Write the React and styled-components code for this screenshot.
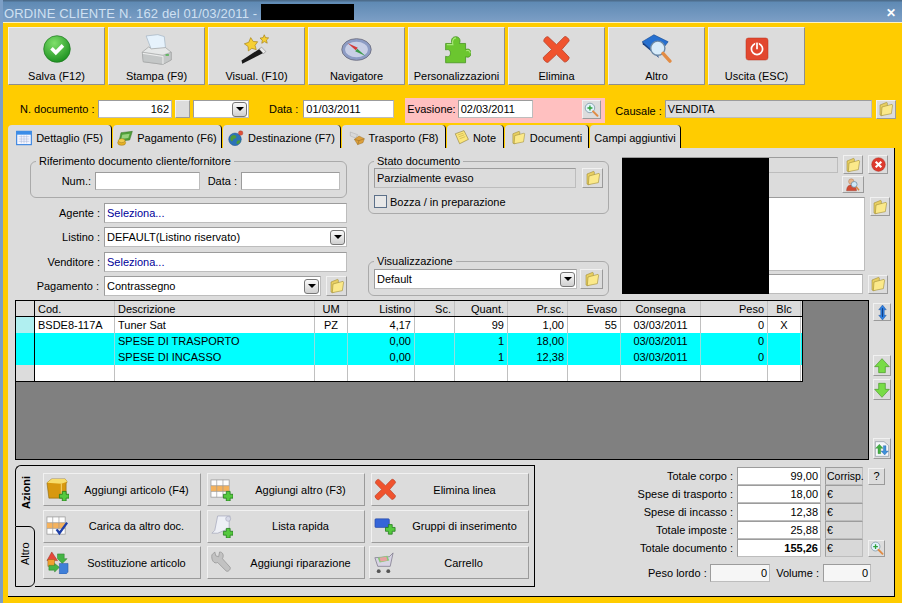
import styled, { createGlobalStyle } from "styled-components";

const Global = createGlobalStyle`
  html, body { margin: 0; padding: 0; background: #ffcc00; }
  * { box-sizing: border-box; }
`;

/* ---------- icons ---------- */
const Ico = styled.svg`
  flex: none;
  display: block;
`;

const Svg = ({ s = 16, children }) => (
  <Ico width={s} height={s} viewBox="0 0 24 24">{children}</Ico>
);

const Check = ({ s }) => (
  <Svg s={s}>
    <defs>
      <radialGradient id="gck" cx="40%" cy="28%" r="80%">
        <stop offset="0" stopColor="#7fe06a" />
        <stop offset="1" stopColor="#158a1a" />
      </radialGradient>
    </defs>
    <circle cx="12" cy="12" r="11.4" fill="url(#gck)" stroke="#1d7a20" strokeWidth=".6" />
    <path d="M6.2 12.5l2.2-2.3 2.6 2.6 5-5 2.2 2.2-7.2 7.3z" fill="#fff" />
  </Svg>
);

const Printer = ({ s }) => (
  <Svg s={s}>
    <path d="M4 1.5l9-1 5 1.5 1 9-11 1z" fill="#e6f2fc" stroke="#9fb2c2" strokeWidth=".5" />
    <path d="M1 14l5-4 2 1.5 11-1 4.4 3.6v6L17 23.5 2 21.5z" fill="#e6e8e8" stroke="#9a9c9c" strokeWidth=".5" />
    <path d="M1 14l16 2.4 6.4-2.4v6L17 23.5 1.6 21.5z" fill="#c4c7c7" stroke="#9a9c9c" strokeWidth=".4" />
    <path d="M1.4 15l15.6 2.4v6" fill="none" stroke="#f4f4f4" strokeWidth=".7" />
    <rect x="19" y="15.6" width="2.6" height="1.3" fill="#55b455" />
  </Svg>
);

const Wand = ({ s }) => (
  <Svg s={s}>
    <path d="M1 23l-.6-2.4L15 11l3 3.4z" fill="#1a1a1a" />
    <path d="M14 11.6l2-1.4 3.2 3.4-1.8 1.6z" fill="#eaeaea" stroke="#777" strokeWidth=".4" />
    <path d="M7.5 2.8l2 3 3.4.2-2 2.8.9 3.3-3.4-1-2.7 2-.2-3.4L2.6 7.6 6 6.4z" fill="#f6cf32" stroke="#a37e10" strokeWidth=".5" />
    <path d="M18 .6l1 2.2 2.4.2-1.7 1.7.6 2.4-2.2-1.2-2 1.3.4-2.4-1.8-1.6 2.4-.4z" fill="#f6cf32" stroke="#a37e10" strokeWidth=".5" />
  </Svg>
);

const Compass = ({ s }) => (
  <Svg s={s}>
    <ellipse cx="12" cy="12" rx="11.4" ry="8.4" fill="#8d9cc4" stroke="#667" strokeWidth=".6" />
    <ellipse cx="12" cy="12" rx="8.8" ry="6" fill="#c8cfe6" />
    <path d="M5 7l8 3.6-1.6 2z" fill="#d23a3a" />
    <path d="M19 17l-8-3.6 1.6-2z" fill="#3b9a4a" />
  </Svg>
);

const Puzzle = ({ s }) => (
  <Svg s={s}>
    <path d="M3 7h5.4c-1.4-3 .2-5.6 3-5.6s4.4 2.6 3 5.6H19.5v5c3-1.2 4.5.7 4.5 3s-1.5 4.2-4.5 3v5H3v-5.4c2.6 1 4-.6 4-2.6s-1.4-3.6-4-2.6z" fill="#6bc62f" stroke="#3e8f17" strokeWidth=".6" />
    <path d="M4 8h5c-1-3 .4-5.6 2.6-5.6M20 13c2-.8 3.4.4 3.4 2" fill="none" stroke="#a8e878" strokeWidth=".9" />
  </Svg>
);

const RedX = ({ s }) => (
  <Svg s={s}>
    <path d="M5 1.5L12 8l6.6-6.6c1-.8 4.4 2 3.8 3.6L16.4 12l6 6.4c.4 1.6-2.4 4.6-4 3.8L12 16l-7 6.6c-1.6.6-4.6-2.6-3.8-4.2L8 12 1.6 5.4C1 3.6 3.4 1 5 1.5z" fill="#f0532e" stroke="#b9442c" strokeWidth=".7" />
  </Svg>
);

const BookSearch = ({ s }) => (
  <Svg s={s}>
    <path d="M1 6l9-5.4L21 6l-8 10.5z" fill="#2670d0" stroke="#184c96" strokeWidth=".5" />
    <path d="M1 6l12 10.5 1 2L1.4 8z" fill="#123f86" />
    <circle cx="13" cy="11" r="5.5" fill="#d8ecfa" stroke="#6b88a5" strokeWidth="1.1" />
    <path d="M17 15l5.4 6" stroke="#e28c45" strokeWidth="2.6" strokeLinecap="round" />
  </Svg>
);

const Power = ({ s }) => (
  <Svg s={s}>
    <rect x="1" y="1" width="22" height="22" rx="2.4" fill="#e2472f" stroke="#b7331f" strokeWidth=".5" />
    <circle cx="12" cy="12" r="5.6" fill="none" stroke="#fff" strokeWidth="1.7" />
    <path d="M12 5.4v6.6" stroke="#e2472f" strokeWidth="3.6" />
    <path d="M12 5.8v6.4" stroke="#fff" strokeWidth="1.7" />
  </Svg>
);

const Calendar = ({ s }) => (
  <Svg s={s}>
    <rect x="1" y="2" width="22" height="20" fill="#f4f6ff" stroke="#2f7fe0" strokeWidth="1.6" />
    <rect x="1" y="2" width="22" height="5" fill="#3a8ce8" />
    <path d="M4 10h16M4 13.5h16M4 17h16M8 8v12M12 8v12M16 8v12" stroke="#a8b8d8" strokeWidth=".8" />
  </Svg>
);

const Money = ({ s }) => (
  <Svg s={s}>
    <path d="M6 4l17-2-4 13-16 2z" fill="#4f9f38" stroke="#2f6b1f" strokeWidth=".7" />
    <path d="M8 7l11-1.4-2 6.4-10.6 1.4z" fill="#97d27c" />
    <ellipse cx="7" cy="19" rx="6" ry="4" fill="#e6b126" stroke="#9a7212" strokeWidth=".7" />
    <ellipse cx="7" cy="16" rx="5" ry="3" fill="#f2cb4c" stroke="#9a7212" strokeWidth=".7" />
  </Svg>
);

const Globe = ({ s }) => (
  <Svg s={s}>
    <circle cx="10.5" cy="14" r="9.5" fill="#2c72b8" stroke="#174a80" strokeWidth=".6" />
    <path d="M4 10c3-3 6-3 8-1s-1 4-3 4-1 4-3 4-3-4-2-7zM14 16c2-1 4-1 5 0-1 3-3 5-5 5s-1-4 0-5z" fill="#4d9a3a" />
    <circle cx="19" cy="4.6" r="3.4" fill="#e0503a" stroke="#9d2f20" strokeWidth=".5" />
  </Svg>
);

const Truck = ({ s }) => (
  <Svg s={s}>
    <path d="M2 3l11 4-3 5-8-3z" fill="#d8d8d8" stroke="#a0a0a0" strokeWidth=".6" />
    <path d="M8 14l7-5 8 4-2 6-8 3z" fill="#dca03c" stroke="#8d6420" strokeWidth=".6" />
    <path d="M8 14l7 2 8-3M15 16l-2 6" fill="none" stroke="#8d6420" strokeWidth=".7" />
  </Svg>
);

const Note = ({ s }) => (
  <Svg s={s}>
    <path d="M2 6l14-5 7 14-14 7z" fill="#fbe67a" stroke="#7d6a20" strokeWidth=".8" />
    <path d="M6 8l9-3M7.5 11l9-3.4M9 14l9-3.4" stroke="#b79d36" strokeWidth=".8" />
  </Svg>
);

const Folder = ({ s = 16 }) => (
  <Svg s={s}>
    <path d="M3 6l10-4 1 1v15L5 22 3 21z" fill="#e8cf62" stroke="#97842e" strokeWidth=".8" />
    <path d="M6 9l15-4 1 1-2 13-15 3z" fill="#fbe98a" stroke="#97842e" strokeWidth=".8" />
  </Svg>
);

const MagPlus = ({ s = 16 }) => (
  <Svg s={s}>
    <circle cx="9.5" cy="9.5" r="7.6" fill="#e2f3fb" stroke="#7d97a6" strokeWidth="1.3" />
    <path d="M14.5 15l7 7" stroke="#e08c45" strokeWidth="3.2" strokeLinecap="round" />
    <path d="M9.5 5.5v8M5.5 9.5h8" stroke="#2da13a" strokeWidth="2.2" />
  </Svg>
);

const CloseRed = ({ s = 16 }) => (
  <Svg s={s}>
    <circle cx="12" cy="12" r="11" fill="#dd3a2e" stroke="#9a2a20" strokeWidth=".6" />
    <path d="M7.5 7.5l9 9M16.5 7.5l-9 9" stroke="#fff" strokeWidth="3.4" />
  </Svg>
);

const Person = ({ s = 16 }) => (
  <Svg s={s}>
    <circle cx="9" cy="6" r="4.6" fill="#e8b68c" stroke="#9a5f3a" strokeWidth=".6" />
    <path d="M1 22c0-8 4-10 8-10s9 2 9 10z" fill="#d24b33" stroke="#8d2f20" strokeWidth=".6" />
    <circle cx="14" cy="11" r="5" fill="#cfe8f8" stroke="#66849a" strokeWidth="1.2" />
    <path d="M17.4 15l5 6" stroke="#d88840" strokeWidth="2.4" />
  </Svg>
);

const ArrowBlue = ({ s = 16 }) => (
  <Svg s={s}>
    <path d="M12 0l6 7.5h-3.2v9H18L12 24l-6-7.5h3.2v-9H6z" fill="#2e7fe0" stroke="#1a4f98" strokeWidth=".7" />
    <path d="M12 5v14" stroke="#123f86" strokeWidth="1.6" />
  </Svg>
);

const ArrowGreen = ({ s = 16, down }) => (
  <Svg s={s}>
    <path d={down ? "M12 23L1 11h6V2h10v9h6z" : "M12 1l11 12h-6v9H7v-9H1z"} fill="#78dc46" stroke="#3d8f1c" strokeWidth=".9" />
  </Svg>
);

const Refresh = ({ s = 16 }) => (
  <Svg s={s}>
    <path d="M2 1h13l7 6v16H2z" fill="#f4f6fa" stroke="#7d8a96" strokeWidth=".9" />
    <path d="M8 5L2.5 11H6v8h4v-8h3.5z" fill="#45b045" stroke="#267a26" strokeWidth=".5" />
    <path d="M16 21l5.5-6H18V7h-4v8h-3.5z" fill="#3f8fd8" stroke="#1f5a98" strokeWidth=".5" />
  </Svg>
);

const Plus = ({ x = 14, y = 14 }) => (
  <path
    transform={`translate(${x} ${y})`}
    d="M3 0h4v3h3v4H7v3H3V7H0V3h3z"
    fill="#55c93e"
    stroke="#1f7a1a"
    strokeWidth=".8"
  />
);

const BoxAdd = ({ s }) => (
  <Svg s={s}>
    <path d="M1 5l5-4h14l2 3-1 2v12l-5 3H3z" fill="#d8980f" stroke="#8a650c" strokeWidth=".6" />
    <path d="M1 5l5-4h14l2 3-6 2z" fill="#f7dc6a" />
    <path d="M16 6v15" fill="none" stroke="#fbe080" strokeWidth=".9" />
    <Plus />
  </Svg>
);

const TableAdd = ({ s }) => (
  <Svg s={s}>
    <rect x="1" y="2" width="19" height="18" fill="#fdfdfd" stroke="#9a9a9a" strokeWidth=".8" />
    <rect x="1" y="8" width="19" height="6" fill="#f5b25c" />
    <path d="M7 2v18M13.5 2v18M1 8h19M1 14h19" stroke="#9a9a9a" strokeWidth=".7" />
    <Plus />
  </Svg>
);

const TableCheck = ({ s }) => (
  <Svg s={s}>
    <rect x="1" y="2" width="19" height="18" fill="#fdfdfd" stroke="#9a9a9a" strokeWidth=".8" />
    <rect x="1" y="8" width="19" height="6" fill="#f5b25c" />
    <path d="M7 2v18M13.5 2v18M1 8h19M1 14h19" stroke="#9a9a9a" strokeWidth=".7" />
    <path d="M11 15l3 4 8-11" fill="none" stroke="#1e3fa8" strokeWidth="2.4" />
  </Svg>
);

const ScrollAdd = ({ s }) => (
  <Svg s={s}>
    <path d="M8 1h13l-1 3v10L8 19H2l3-3z" fill="#eef0f6" stroke="#a0a4b8" strokeWidth=".7" />
    <circle cx="19" cy="4" r="2.6" fill="#d8dae8" stroke="#a0a4b8" strokeWidth=".6" />
    <Plus />
  </Svg>
);

const Swap = ({ s }) => (
  <Svg s={s}>
    <path d="M6 1l6 9H1z" fill="#e6483a" stroke="#98281c" strokeWidth=".5" />
    <rect x="2" y="9" width="7" height="7" fill="#f0a030" stroke="#98601c" strokeWidth=".5" />
    <path d="M12 3h7v5h3l-5 5-5-5h0z" fill="#45b445" stroke="#267a26" strokeWidth=".5" />
    <path d="M3 15h6v-2l5 4-5 5v-2H3z" fill="#45b445" stroke="#267a26" strokeWidth=".5" />
    <path d="M14 13l9 0v9l-2 2h-7z" fill="#3f7fd8" stroke="#1f4f98" strokeWidth=".5" />
  </Svg>
);

const Wrench = ({ s }) => (
  <Svg s={s}>
    <path d="M2 4l3-3 1 4 3 1 1-5c3 0 5 3 3 7l8 9c1 2-2 5-4 4l-9-9C4 14 1 9 2 4z" fill="#c2c2c2" stroke="#8e8e8e" strokeWidth=".7" />
  </Svg>
);

const GroupAdd = ({ s }) => (
  <Svg s={s}>
    <rect x="1" y="4" width="15" height="9" rx="1" fill="#3565d8" stroke="#20409a" strokeWidth=".6" />
    <Plus x={12} y={10} />
  </Svg>
);

const Cart = ({ s }) => (
  <Svg s={s}>
    <path d="M3 7l15-1 4-4-3 14H6z" fill="#d8d4e4" stroke="#7d7a8c" strokeWidth=".8" />
    <path d="M6 7l10-2 2 5-10 2z" fill="#88c878" />
    <path d="M8 7l7-1 1 4-7 1z" fill="#e8a0a0" />
    <circle cx="7" cy="21" r="2" fill="#555" />
    <circle cx="17" cy="21" r="2" fill="#555" />
  </Svg>
);

/* ---------- chrome ---------- */
const Page = styled.div`
  width: 902px;
  height: 603px;
  overflow: hidden;
  display: flex;
  flex-direction: column;
  background: #ffcc00;
  border-left: 3px solid #7d9fc6;
  font-family: "Liberation Sans", Arial, sans-serif;
  font-size: 11px;
  color: #000;
`;

const TitleBar = styled.div`
  height: 23px;
  margin-left: -3px;
  flex: none;
  display: flex;
  align-items: center;
  padding: 4px 6px 0 4px;
  background: linear-gradient(#4d6d8c 0, #4d6d8c 1px, #5f8ab4 2px, #7d9fc6 100%);
  border-bottom: 1px solid #fff3c0;
  color: #cfe0f2;
  font-size: 13px;
  letter-spacing: 0.15px;
`;

const Redact = styled.div`
  width: 93px;
  height: 16px;
  margin: -3px 0 0 4px;
  background: #000;
`;

const CloseGlyph = styled.span`
  margin-left: auto;
  color: #fff;
  font-weight: bold;
  font-size: 12px;
`;

const Toolbar = styled.div`
  display: flex;
  gap: 3px;
  padding: 4px 0 0 5px;
`;

const ToolButton = styled.div`
  width: 97px;
  height: 58px;
  background: #dcdcdc;
  border: 1px solid;
  border-color: #f1f1f1 #8e8e8e #8e8e8e #f1f1f1;
  display: flex;
  flex-direction: column;
  align-items: center;
  padding-top: 4px;
  gap: 4px;
`;

const ToolIcon = styled.div`
  height: 34px;
  display: flex;
  align-items: center;
`;

const DocRow = styled.div`
  display: flex;
  align-items: center;
  height: 25px;
  margin-top: 13px;
  padding: 0 0 3px 17px;
`;

const Label = styled.span`
  white-space: nowrap;
  text-align: ${(p) => (p.$left ? "left" : "right")};
  width: ${(p) => (p.$w ? `${p.$w}px` : "auto")};
  margin-left: ${(p) => p.$ml || 0}px;
  margin-top: ${(p) => p.$mt || 0}px;
  flex: none;
`;

const Field = styled.div`
  height: ${(p) => p.$h || 18}px;
  width: ${(p) => (p.$w ? `${p.$w}px` : "auto")};
  flex: ${(p) => (p.$w ? "none" : "1")};
  margin-left: ${(p) => p.$ml || 0}px;
  background: ${(p) => p.$bg || "#fff"};
  border: 1px solid;
  border-color: #9c9c9c #bdbdbd #bdbdbd #9c9c9c;
  display: flex;
  align-items: center;
  justify-content: ${(p) => (p.$right ? "flex-end" : "flex-start")};
  padding: 0 2px;
  color: ${(p) => (p.$blue ? "#000099" : "#000")};
  font-weight: ${(p) => (p.$bold ? "bold" : "normal")};
  white-space: nowrap;
  overflow: hidden;
`;

const UnitField = styled(Field)`
  padding: 0 0 0 1px;
  font-size: 10.5px;
  overflow: visible;
`;

const Combo = styled(Field)`
  justify-content: space-between;
  padding-right: 1px;
`;

const ComboArrow = styled.span`
  width: 15px;
  height: 15px;
  flex: none;
  border: 1px solid #777;
  border-radius: 3px;
  background: linear-gradient(#fafafa, #d0d0d0);
  display: flex;
  align-items: center;
  justify-content: center;
  &::after {
    content: "";
    border: 4px solid transparent;
    border-top: 4px solid #000;
    border-bottom: 0;
  }
`;

const SmallButton = styled.div`
  width: ${(p) => p.$w || 20}px;
  height: ${(p) => p.$h || 19}px;
  margin-left: ${(p) => p.$ml || 0}px;
  margin-right: ${(p) => p.$mr || 0}px;
  margin-top: ${(p) => p.$mt || 0}px;
  flex: none;
  background: #dcdcdc;
  border: 1px solid;
  border-color: #f1f1f1 #9a9a9a #9a9a9a #f1f1f1;
  display: flex;
  align-items: center;
  justify-content: center;
`;

const PinkBox = styled.div`
  width: 200px;
  height: 25px;
  margin-left: 11px;
  align-self: flex-start;
  background: #ffc0c0;
  display: flex;
  align-items: flex-start;
  padding: 2px 0 0 2px;
  line-height: 18px;
`;

const Tabs = styled.div`
  display: flex;
  padding-left: 5px;
  height: 23px;
  margin-top: 2px;
`;

const Tab = styled.div`
  width: ${(p) => p.$w}px;
  margin-right: 1px;
  background: #dcdcdc;
  border-right: 1px solid #000;
  border-radius: 4px 4px 0 0;
  display: flex;
  align-items: center;
  justify-content: center;
  gap: 4px;
  white-space: nowrap;
  padding-top: 2px;
`;

const Panel = styled.div`
  margin-left: 5px;
  width: 887px;
  height: 449px;
  background: #dcdcdc;
  border-right: 1px solid #000;
  border-bottom: 1px solid #000;
  display: flex;
  flex-direction: column;
`;

const FormArea = styled.div`
  display: grid;
  grid-template-columns: 317px 241px 1fr;
  column-gap: 21px;
  height: 152px;
  padding: 7px 0 0 22px;
`;

const LeftCol = styled.div`
  display: flex;
  flex-direction: column;
  gap: 4.5px;
`;

const Group = styled.fieldset`
  margin: 0;
  padding: 0 5px;
  border: 1px solid #aaa;
  border-radius: 6px;
  height: ${(p) => p.$h}px;
  margin-top: ${(p) => p.$top || 0}px;
  min-width: 0;
  flex: none;
  legend {
    padding: 0 3px;
    margin-left: 0;
    line-height: 12px;
  }
`;

const GroupRow = styled.div`
  display: flex;
  align-items: center;
  gap: ${(p) => p.$gap || 4}px;
  margin-top: ${(p) => p.$top || 0}px;
`;

const FormRow = styled.div`
  display: flex;
  align-items: center;
  gap: ${(p) => p.$gap || 4}px;
  height: 20px;
`;

const MidCol = styled.div`
  display: flex;
  flex-direction: column;
`;

const CheckRow = styled.div`
  display: flex;
  align-items: center;
  gap: 3px;
  margin-top: 7px;
`;

const CheckBox = styled.span`
  width: 13px;
  height: 13px;
  border: 1px solid #5c7089;
  background: #e8e8e8;
`;

const RightCol = styled.div`
  position: relative;
  display: flex;
  flex-direction: column;
  margin-left: -8px;
`;

const BlackOut = styled.div`
  position: absolute;
  left: 0;
  top: 3px;
  width: 147px;
  height: 136px;
  background: #000;
`;

const RightRow = styled.div`
  display: flex;
  gap: 5px;
  align-items: ${(p) => p.$align || "center"};
  height: ${(p) => p.$h}px;
  margin-top: ${(p) => p.$top || 0}px;
  justify-content: ${(p) => p.$justify || "flex-start"};
`;

const GridArea = styled.div`
  display: flex;
  margin-left: 7px;
  height: 160px;
  gap: 4px;
`;

const GridBox = styled.div`
  width: 854px;
  height: 160px;
  background: #808080;
  border: 1px solid #000;
`;

const Table = styled.div`
  width: 787px;
  border-bottom: 1px solid #000;
  border-right: 1px solid #000;
  background: #fff;
`;

const COLS = "19px 80px 200px 33px 67px 40px 53px 60px 53px 80px 67px 33px";

const Row = styled.div`
  display: grid;
  grid-template-columns: ${COLS};
  height: 16px;
  background: ${(p) => (p.$head ? "#dcdcdc" : p.$cyan ? "#00ffff" : "#fff")};
  border-bottom: ${(p) => (p.$head ? "1px solid #000" : "none")};
`;

const Cell = styled.div`
  border-right: 1px solid ${(p) => (p.$cyan ? "#8fe0e0" : "#c0c0c0")};
  padding: 0 3px;
  line-height: 16px;
  text-align: ${(p) => p.$al || "left"};
  white-space: nowrap;
  overflow: hidden;
`;

const Indicator = styled.div`
  border-right: 1px solid #000;
  background: ${(p) => p.$bg};
`;

const SideButtons = styled.div`
  display: flex;
  flex-direction: column;
  padding-top: 3px;
`;

const BottomArea = styled.div`
  display: flex;
  justify-content: space-between;
  margin: 5px 9px 0 7px;
  height: 122px;
`;

const ActionBox = styled.div`
  display: flex;
  width: 520px;
  height: 122px;
`;

const SideTabs = styled.div`
  width: 20px;
  display: flex;
  flex-direction: column;
  flex: none;
`;

const VTab = styled.div`
  writing-mode: vertical-rl;
  transform: rotate(180deg);
  display: flex;
  align-items: center;
  justify-content: center;
  font-weight: ${(p) => (p.$on ? "bold" : "normal")};
  height: 61px;
  padding-top: 6px;
  border-style: solid;
  border-color: #000;
  border-width: ${(p) => (p.$on ? "0 0 1px 0" : "1px 1px 1px 0")};
  border-left: ${(p) => (p.$on ? "0" : "1px solid #000")};
  border-right: 1px solid #000;
  border-radius: ${(p) => (p.$on ? "0 0 6px 0" : "6px 0 0 6px")};
`;

const ActionPanel = styled.div`
  flex: 1;
  border: 1px solid #000;
  border-left: none;
  display: grid;
  grid-template-columns: repeat(3, 158px);
  grid-auto-rows: 33px;
  column-gap: 6px;
  row-gap: 3.5px;
  padding: 7px 0 0 8px;
`;

const ActionButton = styled.div`
  display: flex;
  align-items: center;
  background: #dcdcdc;
  border: 1px solid;
  border-color: #f1f1f1 #9a9a9a #9a9a9a #f1f1f1;
  padding-left: 1px;
  margin-left: ${(p) => (p.$shift ? -2 : 0)}px;
  span {
    flex: 1;
    text-align: center;
    padding-left: 4px;
  }
`;

const IconSlot = styled.div`
  width: 24px;
  flex: none;
  display: flex;
  justify-content: center;
`;

const Totals = styled.div`
  display: flex;
  flex-direction: column;
  padding-top: 2px;
`;

const TotalRow = styled.div`
  display: flex;
  align-items: center;
  gap: 4px;
  height: 18px;
`;

const PesoRow = styled.div`
  display: flex;
  align-items: center;
  height: 18px;
  margin-top: 7px;
  margin-left: 18px;
`;

/* ---------- data ---------- */
const tools = [
  ["Salva (F12)", <Check s={28} />],
  ["Stampa (F9)", <Printer s={31} />],
  ["Visual. (F10)", <Wand s={31} />],
  ["Navigatore", <Compass s={31} />],
  ["Personalizzazioni", <Puzzle s={29} />],
  ["Elimina", <RedX s={29} />],
  ["Altro", <BookSearch s={31} />],
  ["Uscita (ESC)", <Power s={24} />],
];

const tabs = [
  ["Dettaglio (F5)", 104, <Calendar s={16} />],
  ["Pagamento (F6)", 109, <Money s={16} />],
  ["Destinazione (F7)", 118, <Globe s={16} />],
  ["Trasporto (F8)", 104, <Truck s={16} />],
  ["Note", 57, <Note s={15} />],
  ["Documenti", 84, <Folder s={15} />],
  ["Campi aggiuntivi", 91, null],
];

const cols = [
  ["Cod.", "left"],
  ["Descrizione", "left"],
  ["UM", "center"],
  ["Listino", "right"],
  ["Sc.", "right"],
  ["Quant.", "right"],
  ["Pr.sc.", "right"],
  ["Evaso", "right"],
  ["Consegna", "center"],
  ["Peso", "right"],
  ["Blc", "center"],
];

const rows = [
  { bg: "#b0eff0", cells: ["BSDE8-117A", "Tuner Sat", "PZ", "4,17", "", "99", "1,00", "55", "03/03/2011", "0", "X"] },
  { bg: "#00ffff", cyan: true, cells: ["", "SPESE DI TRASPORTO", "", "0,00", "", "1", "18,00", "", "03/03/2011", "0", ""] },
  { bg: "#00ffff", cyan: true, cells: ["", "SPESE DI INCASSO", "", "0,00", "", "1", "12,38", "", "03/03/2011", "0", ""] },
  { bg: "#dcdcdc", cells: ["", "", "", "", "", "", "", "", "", "", ""] },
];

const actions = [
  ["Aggiungi articolo (F4)", <BoxAdd s={23} />],
  ["Aggiungi altro (F3)", <TableAdd s={23} />],
  ["Elimina linea", <RedX s={23} />],
  ["Carica da altro doc.", <TableCheck s={23} />],
  ["Lista rapida", <ScrollAdd s={23} />],
  ["Gruppi di inserimento", <GroupAdd s={23} />],
  ["Sostituzione articolo", <Swap s={23} />],
  ["Aggiungi riparazione", <Wrench s={23} />],
  ["Carrello", <Cart s={23} />, true],
];

const totals = [
  ["Totale corpo :", "99,00", "Corrisp."],
  ["Spese di trasporto :", "18,00", "€"],
  ["Spese di incasso :", "12,38", "€"],
  ["Totale imposte :", "25,88", "€"],
  ["Totale documento :", "155,26", "€", true],
];

export default function App() {
  return (
    <>
      <Global />
      <Page>
        <TitleBar>
          ORDINE CLIENTE N. 162 del 01/03/2011 -
          <Redact />
          <CloseGlyph>✕</CloseGlyph>
        </TitleBar>

        <Toolbar>
          {tools.map(([name, icon]) => (
            <ToolButton key={name}>
              <ToolIcon>{icon}</ToolIcon>
              {name}
            </ToolButton>
          ))}
        </Toolbar>

        <DocRow>
          <Label $w={74}>N. documento :</Label>
          <Field $w={74} $right $ml={4}>162</Field>
          <SmallButton $w={15} $h={18} $ml={3} />
          <Combo $w={56} $ml={3}>
            <span />
            <ComboArrow />
          </Combo>
          <Label $ml={20}>Data :</Label>
          <Field $w={91} $ml={5}>01/03/2011</Field>
          <PinkBox>
            <Label>Evasione:</Label>
            <Field $w={75} $ml={2}>02/03/2011</Field>
            <SmallButton $w={19} $h={19} $ml={49}>
              <MagPlus s={15} />
            </SmallButton>
          </PinkBox>
          <Label $ml={10} $mt={3}>Causale :</Label>
          <Field $w={207} $bg="#dcdcdc" $ml={3}>VENDITA</Field>
          <SmallButton $ml={4}>
            <Folder />
          </SmallButton>
        </DocRow>

        <Tabs>
          {tabs.map(([name, w, icon]) => (
            <Tab key={name} $w={w}>
              {icon}
              {name}
            </Tab>
          ))}
        </Tabs>

        <Panel>
          <FormArea>
            <LeftCol>
              <Group $h={43}>
                <legend>Riferimento documento cliente/fornitore</legend>
                <GroupRow $top={5}>
                  <Label $w={55}>Num.:</Label>
                  <Field $w={105}>&nbsp;</Field>
                  <Label $w={33}>Data :</Label>
                  <Field $w={99}>&nbsp;</Field>
                </GroupRow>
              </Group>
              <FormRow>
                <Label $w={70}>Agente :</Label>
                <Field $h={20} $blue>Seleziona...</Field>
              </FormRow>
              <FormRow>
                <Label $w={70}>Listino :</Label>
                <Combo $h={20}>
                  DEFAULT(Listino riservato)
                  <ComboArrow />
                </Combo>
              </FormRow>
              <FormRow>
                <Label $w={70}>Venditore :</Label>
                <Field $h={20} $blue>Seleziona...</Field>
              </FormRow>
              <FormRow $gap={5}>
                <Label $w={69}>Pagamento :</Label>
                <Combo $h={20}>
                  Contrassegno
                  <ComboArrow />
                </Combo>
                <SmallButton $w={21} $h={20}>
                  <Folder />
                </SmallButton>
              </FormRow>
            </LeftCol>

            <MidCol>
              <Group $h={59}>
                <legend>Stato documento</legend>
                <GroupRow $gap={6} $top={1}>
                  <Field $h={20} $bg="#dcdcdc">Parzialmente evaso</Field>
                  <SmallButton $w={21} $h={20}>
                    <Folder />
                  </SmallButton>
                </GroupRow>
                <CheckRow>
                  <CheckBox />
                  Bozza / in preparazione
                </CheckRow>
              </Group>
              <Group $h={41} $top={41}>
                <legend>Visualizzazione</legend>
                <GroupRow $gap={3} $top={2}>
                  <Combo $h={20}>
                    Default
                    <ComboArrow />
                  </Combo>
                  <SmallButton $w={23} $h={20}>
                    <Folder />
                  </SmallButton>
                </GroupRow>
              </Group>
            </MidCol>

            <RightCol>
              <RightRow $h={19}>
                <Field $h={16} $bg="#dcdcdc" />
                <SmallButton>
                  <Folder />
                </SmallButton>
                <SmallButton $mr={6}>
                  <CloseRed s={15} />
                </SmallButton>
              </RightRow>
              <RightRow $h={21} $justify="flex-end">
                <SmallButton $w={22} $h={17} $mr={30}>
                  <Person s={14} />
                </SmallButton>
              </RightRow>
              <RightRow $h={75} $top={2} $align="flex-start">
                <Field $h={74} />
                <SmallButton $mr={4}>
                  <Folder />
                </SmallButton>
              </RightRow>
              <RightRow $h={20} $top={2}>
                <Field $h={20} />
                <SmallButton $mr={6}>
                  <Folder />
                </SmallButton>
              </RightRow>
              <BlackOut />
            </RightCol>
          </FormArea>

          <GridArea>
            <GridBox>
              <Table>
                <Row $head>
                  <Indicator $bg="#dcdcdc" />
                  {cols.map(([c, al]) => (
                    <Cell key={c} $al={al}>{c}</Cell>
                  ))}
                </Row>
                {rows.map((r, i) => (
                  <Row key={i} $cyan={r.cyan}>
                    <Indicator $bg={r.bg} />
                    {r.cells.map((c, j) => (
                      <Cell key={j} $cyan={r.cyan} $al={cols[j][1]}>{c}</Cell>
                    ))}
                  </Row>
                ))}
              </Table>
            </GridBox>
            <SideButtons>
              <SmallButton $w={18} $h={18}>
                <ArrowBlue s={15} />
              </SmallButton>
              <SmallButton $w={18} $h={21} $mt={34}>
                <ArrowGreen s={16} />
              </SmallButton>
              <SmallButton $w={18} $h={21} $mt={3}>
                <ArrowGreen s={16} down />
              </SmallButton>
              <SmallButton $w={18} $h={21} $mt={38}>
                <Refresh s={16} />
              </SmallButton>
            </SideButtons>
          </GridArea>

          <BottomArea>
            <ActionBox>
              <SideTabs>
                <VTab $on>Azioni</VTab>
                <VTab>Altro</VTab>
              </SideTabs>
              <ActionPanel>
                {actions.map(([name, icon, shift]) => (
                  <ActionButton key={name} $shift={shift}>
                    <IconSlot>{icon}</IconSlot>
                    <span>{name}</span>
                  </ActionButton>
                ))}
              </ActionPanel>
            </ActionBox>

            <Totals>
              {totals.map(([label, val, unit, bold], i) => (
                <TotalRow key={label}>
                  <Label $w={103}>{label}</Label>
                  <Field $w={84} $right $bold={bold}>{val}</Field>
                  <UnitField $w={38} $bg="#d8d8d8">{unit}</UnitField>
                  {i === 0 && <SmallButton $w={17} $h={17} $ml={1}>?</SmallButton>}
                  {i === 4 && (
                    <SmallButton $w={17} $h={17} $ml={1}>
                      <MagPlus s={14} />
                    </SmallButton>
                  )}
                </TotalRow>
              ))}
              <PesoRow>
                <Label $w={57}>Peso lordo :</Label>
                <Field $w={60} $right $bg="#f6f6f6" $ml={5}>0</Field>
                <Label $w={43} $ml={6}>Volume :</Label>
                <Field $w={48} $right $bg="#f6f6f6" $ml={4}>0</Field>
              </PesoRow>
            </Totals>
          </BottomArea>
        </Panel>
      </Page>
    </>
  );
}
